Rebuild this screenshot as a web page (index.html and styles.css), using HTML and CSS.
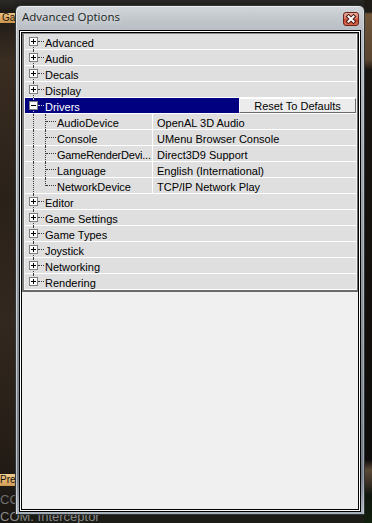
FILE: index.html
```html
<!DOCTYPE html>
<html>
<head>
<meta charset="utf-8">
<link rel="stylesheet" href="styles.css">
</head>
<body>
<div class="bg-left"></div>
<div class="bg-right"></div>
<div class="bg-tab">Ga</div>
<div class="bg-pre">Pre</div>
<div class="bg-text1">COI</div>
<div class="bg-text2">COM. Interceptor</div>

<div class="window">
  <div class="titlebar">
    <span class="title">Advanced Options</span>
    <span class="close">
      <svg width="14" height="12" viewBox="0 0 14 12">
        <path d="M4.5 3.5 L9.5 8.5 M9.5 3.5 L4.5 8.5" stroke="#4a1a12" stroke-width="4" stroke-linecap="square" fill="none"/>
        <path d="M4.5 3.5 L9.5 8.5 M9.5 3.5 L4.5 8.5" stroke="#ffffff" stroke-width="2" stroke-linecap="square" fill="none"/>
      </svg>
    </span>
  </div>
  <div class="client">
    <div class="tree">
      <div class="row"><span class="gut"><i class="vl first"></i><i class="hl"></i><b class="box plus"></b></span><span class="lbl">Advanced</span></div>
      <div class="row"><span class="gut"><i class="vl"></i><i class="hl"></i><b class="box plus"></b></span><span class="lbl">Audio</span></div>
      <div class="row"><span class="gut"><i class="vl"></i><i class="hl"></i><b class="box plus"></b></span><span class="lbl">Decals</span></div>
      <div class="row"><span class="gut"><i class="vl"></i><i class="hl"></i><b class="box plus"></b></span><span class="lbl">Display</span></div>
      <div class="row sel"><span class="hi"><span class="gut"><i class="vl"></i><i class="hl"></i><b class="box"></b></span><span class="lbl">Drivers</span></span><span class="reset">Reset To Defaults</span></div>
      <div class="row"><span class="gut wide"><i class="vl"></i><i class="vl2"></i><i class="hl2"></i></span><span class="name">AudioDevice</span><span class="val">OpenAL 3D Audio</span></div>
      <div class="row"><span class="gut wide"><i class="vl"></i><i class="vl2"></i><i class="hl2"></i></span><span class="name">Console</span><span class="val">UMenu Browser Console</span></div>
      <div class="row"><span class="gut wide"><i class="vl"></i><i class="vl2"></i><i class="hl2"></i></span><span class="name tight">GameRenderDevi...</span><span class="val">Direct3D9 Support</span></div>
      <div class="row"><span class="gut wide"><i class="vl"></i><i class="vl2"></i><i class="hl2"></i></span><span class="name">Language</span><span class="val">English (International)</span></div>
      <div class="row"><span class="gut wide"><i class="vl"></i><i class="vl2 last"></i><i class="hl2"></i></span><span class="name">NetworkDevice</span><span class="val">TCP/IP Network Play</span></div>
      <div class="row"><span class="gut"><i class="vl"></i><i class="hl"></i><b class="box plus"></b></span><span class="lbl">Editor</span></div>
      <div class="row"><span class="gut"><i class="vl"></i><i class="hl"></i><b class="box plus"></b></span><span class="lbl">Game Settings</span></div>
      <div class="row"><span class="gut"><i class="vl"></i><i class="hl"></i><b class="box plus"></b></span><span class="lbl">Game Types</span></div>
      <div class="row"><span class="gut"><i class="vl"></i><i class="hl"></i><b class="box plus"></b></span><span class="lbl">Joystick</span></div>
      <div class="row"><span class="gut"><i class="vl"></i><i class="hl"></i><b class="box plus"></b></span><span class="lbl">Networking</span></div>
      <div class="row"><span class="gut"><i class="vl last"></i><i class="hl"></i><b class="box plus"></b></span><span class="lbl">Rendering</span></div>
    </div>
  </div>
</div>
</body>
</html>
```

FILE: styles.css
```css
html, body {
  margin: 0;
  padding: 0;
}
body {
  width: 372px;
  height: 523px;
  overflow: hidden;
  position: relative;
  background: linear-gradient(180deg, #2a2826 0px, #16130f 14px, #15120e 480px, #1c1d17 523px);
  font-family: "Liberation Sans", Arial, sans-serif;
}

/* background game screen pieces */
.bg-left {
  position: absolute;
  left: 0;
  top: 0;
  width: 15px;
  height: 523px;
  background: linear-gradient(180deg, #2c2a27 0px, #1d1a16 12px, #3a2d22 60px, #2a2119 200px, #33281f 320px, #261e17 440px, #1a1612 523px);
}
.bg-right {
  position: absolute;
  right: 0;
  top: 0;
  width: 8px;
  height: 523px;
  background: linear-gradient(180deg, #1f1c18 0px, #1f1c18 12px, #6e5538 14px, #5a4530 60px, #18140f 70px, #0e0c0a 460px, #5a4a36 470px, #3c3226 482px, #0f160d 495px, #12200e 523px);
}
.bg-tab {
  position: absolute;
  left: 0;
  top: 13px;
  width: 16px;
  height: 10px;
  background: linear-gradient(180deg, #e9c184, #c8944e);
  color: #2a1a08;
  font-size: 10px;
  line-height: 10px;
  padding-left: 2px;
  box-sizing: border-box;
  overflow: hidden;
  white-space: nowrap;
}
.bg-pre {
  position: absolute;
  left: 0;
  top: 474px;
  width: 16px;
  height: 12px;
  background: linear-gradient(180deg, #f0cc90, #d19a55);
  color: #1a1004;
  font-size: 10px;
  line-height: 12px;
  overflow: hidden;
  white-space: nowrap;
  box-sizing: border-box;
}
.bg-text1 {
  position: absolute;
  left: 0;
  top: 493px;
  color: #6f6f6f;
  font-size: 13px;
  line-height: 14px;
}
.bg-text2 {
  position: absolute;
  left: 0;
  top: 511px;
  color: #8a8a8a;
  font-size: 13px;
  line-height: 12px;
  white-space: nowrap;
}

/* window */
.window {
  position: relative;
  z-index: 1;
  margin: 5px 0 0 15px;
  width: 350px;
  height: 510px;
  box-sizing: border-box;
  border: 1px solid #2f3439;
  border-radius: 6px 6px 0 0;
  padding: 0 3px 2px 3px;
  display: flex;
  flex-direction: column;
  background: linear-gradient(180deg, #d3d7db 0px, #c3c8cd 12px, #b8bec4 24px, #a3abb2 140px, #8d959d 300px, #727b83 470px, #a8b0b8 505px);
  box-shadow: inset 1px 1px 0 rgba(255, 255, 255, 0.55), inset -1px 0 0 rgba(255, 255, 255, 0.3);
}
.titlebar {
  height: 24px;
  box-sizing: border-box;
  padding: 0 0 3px 3px;
  flex: none;
  display: flex;
  align-items: center;
}
.title {
  font-family: "Open Sans", "Liberation Sans", sans-serif;
  font-size: 11.5px;
  color: #1b1e22;
  text-shadow: 0 0 6px rgba(255, 255, 255, 0.8);
}
.close {
  margin-left: auto;
  margin-right: 2px;
  margin-top: 4px;
  width: 16px;
  height: 14px;
  box-sizing: border-box;
  border: 1px solid #6a2418;
  border-radius: 3px;
  background: linear-gradient(180deg, #eab0a2 0%, #d9735e 45%, #c44a32 55%, #d8684c 100%);
  display: flex;
  align-items: center;
  justify-content: center;
}
.close svg {
  display: block;
}

/* client area */
.client {
  flex: 1;
  border: 1px solid #000;
  box-shadow: inset 0 0 0 1px #fff, inset 0 0 0 2px #000;
  padding: 2px;
  background: #f0f0f0;
}
.tree {
  border-top: 1px solid #8a8a8a;
  border-left: 2px solid #7c7c7c;
  border-right: 1px solid #6a6a6a;
  border-bottom: 2px solid #6a6a6a;
  padding: 0 1px;
  background: #f0f0f0;
}
.row {
  height: 15px;
  border-bottom: 1px solid #fff;
  background: #dfdfdf;
  display: flex;
  font-size: 11px;
  color: #000;
  white-space: nowrap;
}
.lbl, .name, .val {
  height: 15px;
  box-sizing: border-box;
  padding-top: 3px;
  line-height: 12px;
}
.gut {
  width: 20px;
  height: 15px;
  flex: none;
  position: relative;
}
.gut.wide {
  width: 32px;
}
.vl, .vl2 {
  position: absolute;
  left: 8px;
  top: 0;
  height: 16px;
  border-left: 1px dotted #3a3a3a;
}
.vl.first {
  top: 8px;
  height: 8px;
}
.vl.last {
  height: 8px;
}
.vl2 {
  left: 20px;
}
.vl2.last {
  height: 8px;
}
.hl {
  position: absolute;
  left: 13px;
  top: 7px;
  width: 6px;
  border-top: 1px dotted #3a3a3a;
}
.hl2 {
  position: absolute;
  left: 21px;
  top: 7px;
  width: 10px;
  border-top: 1px dotted #3a3a3a;
}
.box {
  position: absolute;
  left: 4px;
  top: 3px;
  width: 9px;
  height: 9px;
  box-sizing: border-box;
  border: 1px solid #7f7f7f;
  background: #fbfbfb;
}
.box::before {
  content: "";
  position: absolute;
  left: 1px;
  top: 3px;
  width: 5px;
  height: 1px;
  background: #000;
}
.box.plus::after {
  content: "";
  position: absolute;
  left: 3px;
  top: 1px;
  width: 1px;
  height: 5px;
  background: #000;
}
.name {
  width: 95px;
  flex: none;
  overflow: hidden;
}
.name.tight {
  letter-spacing: -0.2px;
}
.val {
  flex: 1;
  border-left: 1px solid #fff;
  padding-left: 4px;
}

/* selected row */
.hi {
  flex: 1;
  height: 15px;
  display: flex;
  background: #000080;
  color: #fff;
}
.sel .vl, .sel .hl {
  border-color: #c8c8e8;
}
.reset {
  width: 117px;
  height: 15px;
  flex: none;
  box-sizing: border-box;
  background: #ececec;
  border: 1px solid;
  border-color: #ffffff #6a6a6a #6a6a6a #ffffff;
  text-align: center;
  padding-top: 2px;
  line-height: 11px;
  font-size: 11px;
  color: #000;
}
```
